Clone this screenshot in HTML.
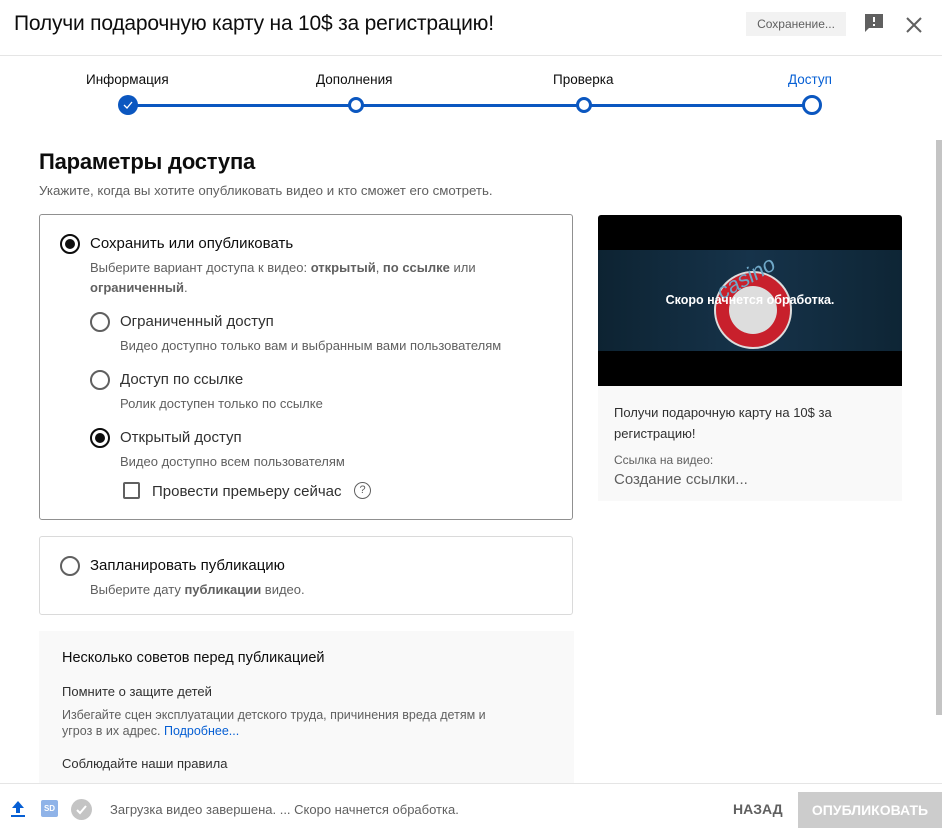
<!DOCTYPE html>
<html><head><meta charset="utf-8"><style>
*{margin:0;padding:0;box-sizing:border-box}
body{width:942px;height:830px;position:relative;overflow:hidden;background:#fff;font-family:"Liberation Sans","Noto Sans CJK SC",sans-serif;color:#0d0d0d}
.a{position:absolute;white-space:nowrap}
.g{color:#606060}
.radio{position:absolute;width:20px;height:20px;border:2px solid #606060;border-radius:50%}
.radio.on{border-color:#0d0d0d}
.radio.on::after{content:"";position:absolute;left:3px;top:3px;width:10px;height:10px;border-radius:50%;background:#0d0d0d}
.dot{position:absolute;width:16px;height:16px;border:3px solid #0b57c0;border-radius:50%;background:#fff}
</style></head><body>
<div class="a" style="left:14px;top:12px;font-size:21px;letter-spacing:-0.2px">Получи подарочную карту на 10$ за регистрацию!</div>
<div class="a" style="left:746px;top:12px;width:100px;height:24px;background:#f2f2f2;font-size:12px;color:#606060;line-height:24px;text-align:center">Сохранение...</div>
<svg class="a" style="left:863px;top:12px" width="22" height="22" viewBox="0 0 22 22"><path d="M2 2h18v14H6l-4 4z" fill="#606060"/><rect x="10" y="5" width="2" height="5" fill="#fff"/><rect x="10" y="12" width="2" height="2" fill="#fff"/></svg>
<svg class="a" style="left:905px;top:16px" width="18" height="18" viewBox="0 0 18 18"><path d="M2 2L16 16M16 2L2 16" stroke="#606060" stroke-width="2"/></svg>
<div class="a" style="left:0;top:55px;width:942px;height:1px;background:#e5e5e5"></div>

<div class="a" style="left:86px;top:72px;font-size:13.5px">Информация</div>
<div class="a" style="left:316px;top:72px;font-size:13.5px">Дополнения</div>
<div class="a" style="left:553px;top:72px;font-size:13.5px">Проверка</div>
<div class="a" style="left:788px;top:72px;font-size:13.5px;color:#065fd4">Доступ</div>
<div class="a" style="left:128px;top:104px;width:684px;height:2.5px;background:#0b57c0"></div>
<div class="a" style="left:118px;top:95px;width:20px;height:20px;border-radius:50%;background:#0b57c0"></div>
<svg class="a" style="left:121px;top:98px" width="14" height="14" viewBox="0 0 14 14"><path d="M3 7l3 3 5-6" stroke="#fff" stroke-width="1.3" fill="none"/></svg>
<div class="dot" style="left:348px;top:97px"></div>
<div class="dot" style="left:576px;top:97px"></div>
<div class="dot" style="left:802px;top:95px;width:20px;height:20px"></div>

<div class="a" style="left:39px;top:149px;font-size:22px;font-weight:bold;letter-spacing:-0.2px">Параметры доступа</div>
<div class="a g" style="left:39px;top:183px;font-size:13.3px">Укажите, когда вы хотите опубликовать видео и кто сможет его смотреть.</div>

<div class="a" style="left:39px;top:214px;width:534px;height:306px;border:1px solid #909090;border-radius:3px"></div>
<div class="radio on" style="left:60px;top:234px"></div>
<div class="a" style="left:90px;top:235px;font-size:15px">Сохранить или опубликовать</div>
<div class="a g" style="left:90px;top:260px;font-size:13px">Выберите вариант доступа к видео: <b>открытый</b>, <b>по ссылке</b> или</div>
<div class="a g" style="left:90px;top:280px;font-size:13px"><b>ограниченный</b>.</div>
<div class="radio" style="left:90px;top:312px"></div>
<div class="a" style="left:120px;top:313px;font-size:15px;color:#303030">Ограниченный доступ</div>
<div class="a g" style="left:120px;top:338px;font-size:13px">Видео доступно только вам и выбранным вами пользователям</div>
<div class="radio" style="left:90px;top:370px"></div>
<div class="a" style="left:120px;top:371px;font-size:15px;color:#303030">Доступ по ссылке</div>
<div class="a g" style="left:120px;top:396px;font-size:13px">Ролик доступен только по ссылке</div>
<div class="radio on" style="left:90px;top:428px"></div>
<div class="a" style="left:120px;top:429px;font-size:15px;color:#303030">Открытый доступ</div>
<div class="a g" style="left:120px;top:454px;font-size:13px">Видео доступно всем пользователям</div>
<div class="a" style="left:123px;top:482px;width:17px;height:17px;border:2px solid #606060;border-radius:2px"></div>
<div class="a" style="left:152px;top:483px;font-size:15px;color:#303030">Провести премьеру сейчас</div>
<div class="a" style="left:354px;top:482px;width:17px;height:17px;border:1.5px solid #606060;border-radius:50%;font-size:11px;text-align:center;line-height:14px;color:#606060">?</div>

<div class="a" style="left:39px;top:536px;width:534px;height:79px;border:1px solid #dadada;border-radius:3px"></div>
<div class="radio" style="left:60px;top:556px"></div>
<div class="a" style="left:90px;top:557px;font-size:15px">Запланировать публикацию</div>
<div class="a g" style="left:90px;top:582px;font-size:13px">Выберите дату <b>публикации</b> видео.</div>

<div class="a" style="left:39px;top:631px;width:535px;height:152px;background:#f9f9f9"></div>
<div class="a" style="left:62px;top:650px;font-size:14.5px">Несколько советов перед публикацией</div>
<div class="a" style="left:62px;top:684px;font-size:13px;color:#303030">Помните о защите детей</div>
<div class="a g" style="left:62px;top:708px;font-size:12.5px">Избегайте сцен эксплуатации детского труда, причинения вреда детям и</div>
<div class="a g" style="left:62px;top:724px;font-size:12.5px">угроз в их адрес. <span style="color:#065fd4">Подробнее...</span></div>
<div class="a" style="left:62px;top:756px;font-size:13px;color:#303030">Соблюдайте наши правила</div>

<div class="a" style="left:598px;top:215px;width:304px;height:171px;background:#000;border-radius:3px 3px 0 0;overflow:hidden">
 <div class="a" style="left:0;top:35px;width:304px;height:101px;background:linear-gradient(90deg,#0d2332,#16334a 50%,#0e2535)"></div>
 <svg class="a" style="left:110px;top:40px" width="90" height="100" viewBox="0 0 90 100"><circle cx="45" cy="55" r="38" fill="#c8202c" stroke="#ddd" stroke-width="2"/><circle cx="45" cy="55" r="24" fill="#ddd"/><text x="10" y="30" font-size="22" fill="#6fa8c8" font-family="Liberation Sans" font-style="italic" transform="rotate(-30 40 30)">casino</text></svg>
 <div class="a" style="left:0;top:78px;width:304px;text-align:center;color:#fff;font-size:12.5px;font-weight:bold">Скоро начнется обработка.</div>
</div>
<div class="a" style="left:598px;top:386px;width:304px;height:115px;background:#f9f9f9"></div>
<div class="a" style="left:614px;top:402px;font-size:13px;line-height:21px;color:#303030;white-space:normal;width:270px">Получи подарочную карту на 10$ за регистрацию!</div>
<div class="a g" style="left:614px;top:453px;font-size:12px">Ссылка на видео:</div>
<div class="a g" style="left:614px;top:471px;font-size:15px">Создание ссылки...</div>

<div class="a" style="left:936px;top:140px;width:6px;height:575px;background:#c4c4c4"></div>

<div class="a" style="left:0;top:783px;width:942px;height:1px;background:#e5e5e5"></div>
<svg class="a" style="left:10px;top:800px" width="16" height="18" viewBox="0 0 16 18"><path d="M8 1L2 8h4v5h4V8h4z" fill="#065fd4"/><rect x="1" y="15" width="14" height="2" fill="#065fd4"/></svg>
<div class="a" style="left:41px;top:800px;width:17px;height:17px;background:#8fb3e8;border-radius:2px;color:#fff;font-size:8px;font-weight:bold;text-align:center;line-height:17px">SD</div>
<div class="a" style="left:71px;top:799px;width:21px;height:21px;border-radius:50%;background:#c4c4c4"></div>
<svg class="a" style="left:71px;top:799px" width="21" height="21" viewBox="0 0 21 21"><path d="M6 11l3 3 6-7" stroke="#fff" stroke-width="2" fill="none"/></svg>
<div class="a g" style="left:110px;top:802px;font-size:13px">Загрузка видео завершена. ... Скоро начнется обработка.</div>
<div class="a g" style="left:733px;top:801px;font-size:14px;font-weight:bold;color:#606060">НАЗАД</div>
<div class="a" style="left:798px;top:792px;width:144px;height:36px;background:#ccc;color:#fff;font-size:14px;font-weight:bold;text-align:center;line-height:36px">ОПУБЛИКОВАТЬ</div>
</body></html>
